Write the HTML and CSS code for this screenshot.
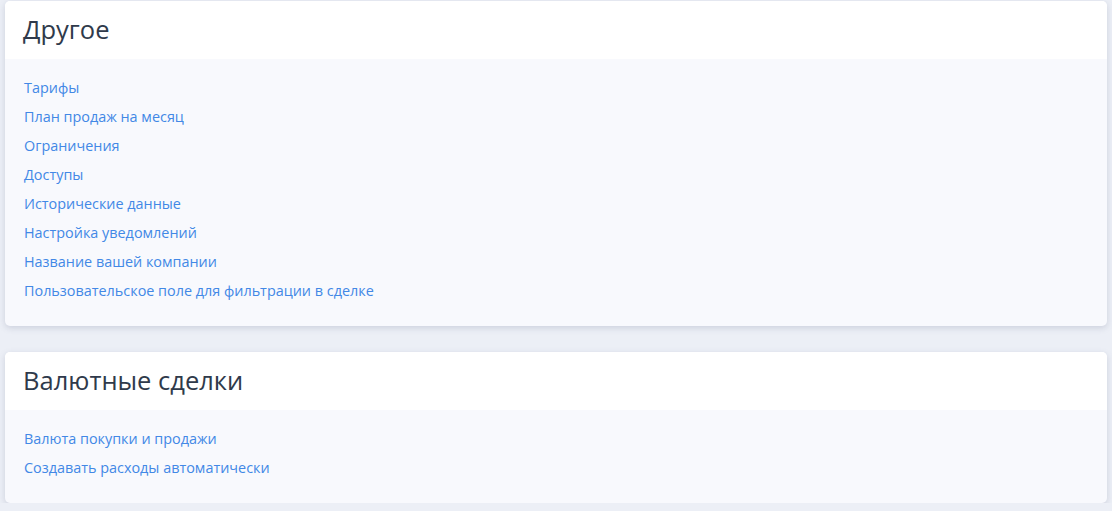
FILE: index.html
```html
<!DOCTYPE html>
<html lang="ru">
<head>
<meta charset="utf-8">
<link rel="stylesheet" href="styles.css">
</head>
<body>
<div class="page">
  <section class="card">
    <header class="card-head"><h2 class="card-title">Другое</h2></header>
    <ul class="card-body">
      <li><a href="#">Тарифы</a></li>
      <li><a href="#">План продаж на месяц</a></li>
      <li><a href="#">Ограничения</a></li>
      <li><a href="#">Доступы</a></li>
      <li><a href="#">Исторические данные</a></li>
      <li><a href="#">Настройка уведомлений</a></li>
      <li><a href="#">Название вашей компании</a></li>
      <li><a href="#">Пользовательское поле для фильтрации в сделке</a></li>
    </ul>
  </section>
  <section class="card">
    <header class="card-head"><h2 class="card-title">Валютные сделки</h2></header>
    <ul class="card-body">
      <li><a href="#">Валюта покупки и продажи</a></li>
      <li><a href="#">Создавать расходы автоматически</a></li>
    </ul>
  </section>
</div>
</body>
</html>
```
FILE: styles.css
```css
html, body {
  margin: 0;
  padding: 0;
  background: #eceff6;
  font-family: "Open Sans", "Noto Sans", sans-serif;
}
.page {
  display: flex;
  flex-direction: column;
  gap: 26px;
  padding: 1px 5px 0 5px;
}
.card {
  background: #f8f9fd;
  border-radius: 5px;
  box-shadow: 0 2px 6px rgba(90, 100, 130, 0.22);
  overflow: hidden;
}
.card-head {
  background: #ffffff;
  height: 58px;
  display: flex;
  align-items: center;
  padding: 0 18px;
}
.card-title {
  margin: 0;
  font-size: 25.5px;
  font-weight: 400;
  color: #2f3a4b;
  line-height: 1;
}
.card-body {
  list-style: none;
  margin: 0;
  padding: 14px 19px 21px;
}
.card-body li {
  height: 29px;
  line-height: 29px;
}
.card-body a {
  font-size: 14.4px;
  color: #4288e6;
  text-decoration: none;
}
```
